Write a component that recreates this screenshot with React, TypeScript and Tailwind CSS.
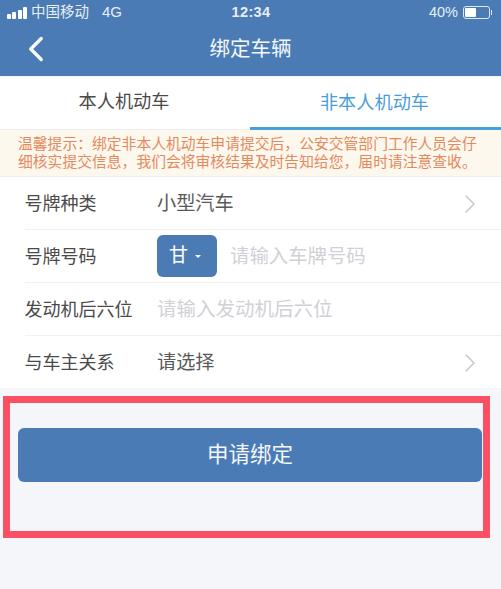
import { ChevronLeft, ChevronRight } from "lucide-react";

const font = "font-['Liberation_Sans','Noto_Sans_CJK_SC',sans-serif]";

// full-width colon and comma, as in the notice text
const COLON = "\uFF1A";
const COMMA = "\uFF0C";

function Row({
  label,
  children,
  arrow,
  last,
}: {
  label: string;
  children: React.ReactNode;
  arrow?: boolean;
  last?: boolean;
}) {
  return (
    <div className={`flex items-center pt-[2px] pr-[15px] ${last ? "h-[52px]" : "h-[53px] border-b border-[#eef0f2]"}`}>
      <div className="w-[132.5px] shrink-0 text-[18px] text-[#4a4a4a]">{label}</div>
      <div className="flex flex-1 items-center">{children}</div>
      {arrow && <ChevronRight className="h-[32px] w-[32px] text-[#c4c6c8]" strokeWidth={1.1} />}
    </div>
  );
}

export default function App() {
  return (
    <div className={`flex h-[589px] w-[501px] flex-col overflow-hidden bg-[#f4f6f9] ${font}`}>
      {/* status bar + nav */}
      <div className="h-[76px] bg-[#4b7bb5] text-white">
        <div className="flex h-[24px] items-center justify-between pl-[7px] pr-[9px] pt-[1px] text-[#e8eef6]">
          <div className="flex w-[150px] items-center">
            <div className="flex items-end gap-[1.3px]">
              <span className="h-[5px] w-[4px] rounded-[1px] bg-white" />
              <span className="h-[7px] w-[4px] rounded-[1px] bg-white" />
              <span className="h-[9px] w-[4px] rounded-[1px] bg-white" />
              <span className="h-[12px] w-[4px] rounded-[1px] bg-white" />
            </div>
            <span className="ml-[4px] text-[14.5px]">中国移动</span>
            <span className="ml-[13px] text-[15px]">4G</span>
          </div>
          <span className="ml-[3px] text-[14.5px] font-bold tracking-[0.4px]">12:34</span>
          <div className="flex w-[150px] items-center justify-end">
            <span className="text-[14.5px]">40%</span>
            <div className="ml-[5px] flex h-[13px] w-[27px] items-center rounded-[3px] border border-[#dfe7f1] p-[1px]">
              <div className="h-full w-[11px] rounded-[1px] bg-white" />
            </div>
            <div className="ml-[1px] h-[5px] w-[1px] bg-[#dfe7f1]" />
          </div>
        </div>
        <div className="relative flex h-[52px] items-center justify-center pb-[1px]">
          <ChevronLeft className="absolute left-[15px] top-[4px] h-[42px] w-[42px]" strokeWidth={1.9} />
          <span className="text-[20.5px] text-[#f4f7fb]">绑定车辆</span>
        </div>
      </div>

      {/* tabs */}
      <div className="mt-[1px] flex h-[53px] bg-white text-[18.2px]">
        <div className="flex w-[250px] items-center justify-center border-b border-[#f2edf0] pr-[2px] text-[#4a4a4a]">本人机动车</div>
        <div className="flex flex-1 items-center justify-center border-b-[3px] border-[#46a0dc] pt-[3px] pr-[2px] text-[#4a9ed8]">非本人机动车</div>
      </div>

      {/* notice */}
      <div className="h-[47px] border-b border-[#f3efe6] bg-[#fdf8ee] px-[18px] pt-[5px] text-[14.8px] leading-[18px] whitespace-nowrap text-[#e5895c]">
        <div>{`温馨提示${COLON}绑定非本人机动车申请提交后${COMMA}公安交管部门工作人员会仔`}</div>
        <div>{`细核实提交信息${COMMA}我们会将审核结果及时告知给您${COMMA}届时请注意查收。`}</div>
      </div>

      {/* form */}
      <div className="bg-white pl-[24.5px]">
        <Row label="号牌种类" arrow>
          <span className="text-[19.2px] text-[#5a5a5a]">小型汽车</span>
        </Row>
        <Row label="号牌号码">
          <div className="-mt-[2px] flex h-[42px] w-[60px] items-center rounded-[6px] bg-[#4b7bb5] pl-[12px] text-[19px] text-white">
            甘
            <span className="ml-[7px] h-0 w-0 border-x-[3.5px] border-t-[3.5px] border-x-transparent border-t-white" />
          </div>
          <span className="ml-[13px] text-[19.4px] text-[#cfd1d6]">请输入车牌号码</span>
        </Row>
        <Row label="发动机后六位">
          <span className="text-[19.5px] text-[#cfd1d6]">请输入发动机后六位</span>
        </Row>
        <Row label="与车主关系" arrow last>
          <span className="text-[19.2px] text-[#5a5a5a]">请选择</span>
        </Row>
      </div>

      {/* highlighted submit area */}
      <div className="mt-[8px] ml-[3px] h-[142px] w-[487px] border-[7px] border-[#fb4f63] px-[8px] pt-[25px]">
        <button className="h-[54px] w-[464px] rounded-[6px] bg-[#4b7bb5] text-[21.5px] text-[#f4f7fb]">申请绑定</button>
      </div>
    </div>
  );
}
